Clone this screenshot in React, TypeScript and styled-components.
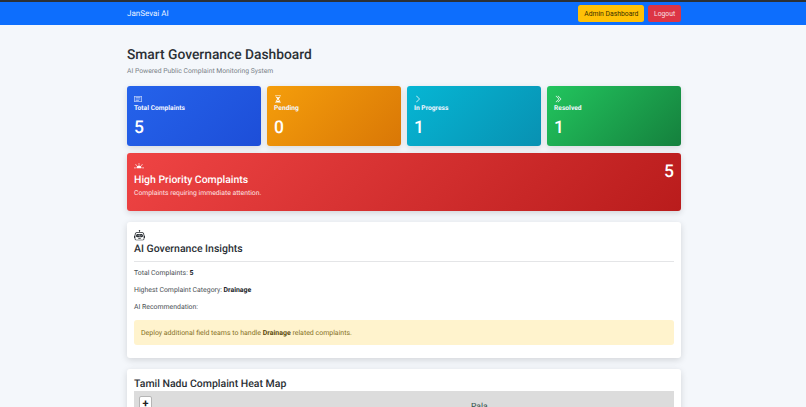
import styled, { createGlobalStyle } from "styled-components";
import { BsRobot, BsHourglassSplit, BsChevronRight, BsChevronDoubleRight, BsCardText, BsBrightnessAltHighFill } from "react-icons/bs";

const GlobalStyle = createGlobalStyle`
  html, body {
    margin: 0;
    padding: 0;
    height: 100%;
    overflow: hidden;
    background: #f4f7fb;
    font-family: Roboto, "Open Sans", sans-serif;
    color: #212529;
    text-rendering: geometricPrecision;
  }
`;

const TopStrip = styled.div`
  height: 2px;
  background: #2b3035;
`;

const Navbar = styled.nav`
  height: 23px;
  background: #0d6efd;
  display: flex;
  align-items: center;
  justify-content: space-between;
  padding: 0 125px 0 127px;
`;

const Brand = styled.div`
  font-size: 8px;
  color: #e8f1ff;
`;

const NavActions = styled.div`
  display: flex;
  gap: 4px;
`;

const NavButton = styled.button<{ $variant: "warning" | "danger" }>`
  height: 17px;
  padding: 0 5.8px;
  border: none;
  border-radius: 2.5px;
  font-family: inherit;
  font-size: 6.8px;
  background: ${(p) => (p.$variant === "warning" ? "#ffc107" : "#dc3545")};
  color: ${(p) => (p.$variant === "warning" ? "#3a3000" : "#f8e0e2")};
`;

const Container = styled.main`
  width: 554px;
  margin: 0 auto;
  padding-top: 20px;
  transform: translateX(1px);
`;

const Title = styled.h1`
  margin: 0;
  font-size: 13.8px;
  line-height: 20px;
  font-weight: 500;
  color: #2b3035;
`;

const Subtitle = styled.p`
  margin: 0;
  font-size: 6.8px;
  line-height: 12px;
  color: #7a8288;
`;

const StatGrid = styled.section`
  display: grid;
  grid-template-columns: repeat(4, 134px);
  gap: 6px;
  margin-top: 9px;
`;

const StatCard = styled.div<{ $from: string; $to: string }>`
  height: 60px;
  box-sizing: border-box;
  padding: 8px 7px 0;
  border-radius: 3px;
  color: #fff;
  background: linear-gradient(135deg, ${(p) => p.$from}, ${(p) => p.$to});
  box-shadow: 0 2px 6px rgba(0, 0, 0, 0.12);
`;

const StatIcon = styled.div`
  height: 9px;
  font-size: 8px;
  line-height: 9px;
  display: flex;
  align-items: center;
`;

const StatLabel = styled.div`
  font-size: 6.7px;
  line-height: 11px;
  font-weight: 700;
  color: #f2f6ff;
`;

const StatValue = styled.div`
  margin-top: 3px;
  font-size: 17.5px;
  line-height: 22px;
  font-weight: 500;
`;

const PriorityBanner = styled.section`
  height: 58px;
  box-sizing: border-box;
  margin-top: 7px;
  padding: 8px 7px 0;
  border-radius: 3px;
  display: flex;
  justify-content: space-between;
  color: #fff;
  background: linear-gradient(135deg, #ef4444, #b91c1c);
  box-shadow: 0 2px 6px rgba(0, 0, 0, 0.14);
`;

const PriorityTitle = styled.h2`
  margin: 2px 0 0;
  font-size: 10.45px;
  line-height: 15px;
  font-weight: 500;
`;

const PriorityText = styled.p`
  margin: 1px 0 0;
  font-size: 6.8px;
  line-height: 11px;
  color: #fde3e3;
`;

const PriorityCount = styled.div`
  margin-top: 1px;
  font-size: 17.5px;
  line-height: 20px;
  font-weight: 500;
`;

const Panel = styled.section`
  margin-top: 11px;
  padding: 7px 7px 13px;
  background: #fff;
  border-radius: 3px;
  box-shadow: 0 2px 7px rgba(0, 0, 0, 0.14);
`;

const PanelIcon = styled(BsRobot)`
  display: block;
  margin-top: 1px;
  font-size: 11px;
  color: #2b3035;
`;

const PanelTitle = styled.h2`
  margin: 0;
  font-size: 10.5px;
  line-height: 15px;
  font-weight: 500;
  color: #2b3035;
`;

const Divider = styled.hr`
  margin: 5px 0 6px;
  border: none;
  border-top: 1px solid #e4e5e7;
`;

const InsightLine = styled.p`
  margin: 0 0 6px;
  font-size: 6.9px;
  line-height: 11px;
  color: #4a5055;

  b {
    color: #212529;
  }
`;

const Recommendation = styled.div`
  margin-top: 7px;
  height: 25px;
  padding: 0 7px;
  display: flex;
  align-items: center;
  border-radius: 3px;
  font-size: 6.97px;
  color: #85701f;
  background: #fff3cd;

  b {
    color: #5c4a0c;
  }
`;

const MapFrame = styled.div`
  position: relative;
  height: 60px;
  background: #dcdcdc;
`;

const ZoomButton = styled.div`
  position: absolute;
  top: 5px;
  left: 5px;
  width: 13px;
  height: 14px;
  display: flex;
  align-items: center;
  justify-content: center;
  background: #fff;
  border: 1px solid #b5b5b5;
  border-radius: 2px;
  box-sizing: border-box;
  font-size: 11px;
  line-height: 11px;
  font-weight: 700;
  color: #222;
`;

const MapLabel = styled.div`
  position: absolute;
  top: 11px;
  left: 337px;
  font-size: 8.5px;
  color: #33524a;
`;

const stats = [
  { label: "Total Complaints", value: 5, from: "#2563eb", to: "#1d4ed8", icon: <BsCardText /> },
  { label: "Pending", value: 0, from: "#f59e0b", to: "#d97706", icon: <BsHourglassSplit /> },
  { label: "In Progress", value: 1, from: "#06b6d4", to: "#0891b2", icon: <BsChevronRight /> },
  { label: "Resolved", value: 1, from: "#22c55e", to: "#15803d", icon: <BsChevronDoubleRight /> }
];

export default function App() {
  return (
    <>
      <GlobalStyle />
      <TopStrip />
      <Navbar>
        <Brand>JanSevai AI</Brand>
        <NavActions>
          <NavButton $variant="warning">Admin Dashboard</NavButton>
          <NavButton $variant="danger">Logout</NavButton>
        </NavActions>
      </Navbar>
      <Container>
        <Title>Smart Governance Dashboard</Title>
        <Subtitle>AI Powered Public Complaint Monitoring System</Subtitle>
        <StatGrid>
          {stats.map((s) => (
            <StatCard key={s.label} $from={s.from} $to={s.to}>
              <StatIcon>{s.icon}</StatIcon>
              <StatLabel>{s.label}</StatLabel>
              <StatValue>{s.value}</StatValue>
            </StatCard>
          ))}
        </StatGrid>
        <PriorityBanner>
          <div>
            <StatIcon>
              <BsBrightnessAltHighFill size={10} />
            </StatIcon>
            <PriorityTitle>High Priority Complaints</PriorityTitle>
            <PriorityText>Complaints requiring immediate attention.</PriorityText>
          </div>
          <PriorityCount>5</PriorityCount>
        </PriorityBanner>
        <Panel>
          <PanelIcon />
          <PanelTitle>AI Governance Insights</PanelTitle>
          <Divider />
          <InsightLine>
            Total Complaints: <b>5</b>
          </InsightLine>
          <InsightLine>
            Highest Complaint Category: <b>Drainage</b>
          </InsightLine>
          <InsightLine>AI Recommendation:</InsightLine>
          <Recommendation>
            <span>
              Deploy additional field teams to handle <b>Drainage</b> related complaints.
            </span>
          </Recommendation>
        </Panel>
        <Panel>
          <PanelTitle>Tamil Nadu Complaint Heat Map</PanelTitle>
          <MapFrame>
            <ZoomButton>+</ZoomButton>
            <MapLabel>Pala</MapLabel>
          </MapFrame>
        </Panel>
      </Container>
    </>
  );
}
